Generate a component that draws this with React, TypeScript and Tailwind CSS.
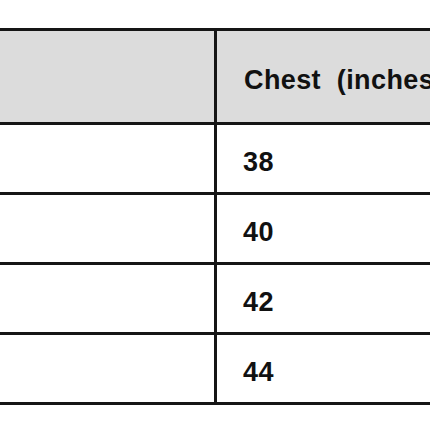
import React from "react";

const rows = ["38", "40", "42", "44"];

export default function App() {
  return (
    <div
      className="w-[430px] h-[430px] overflow-hidden bg-white pt-[28px]"
      style={{ fontFamily: '"Liberation Sans", Arial, sans-serif' }}
    >
      <div className="w-[600px] border-t-[3px] border-[#151515]">
        <div className="grid grid-cols-[217px_1fr] h-[94px] bg-[#dcdcdc] border-b-[3px] border-[#151515]">
          <div className="border-r-[3px] border-[#151515]" />
          <div className="flex items-center pl-[27px] pt-[8px] text-[27px] font-bold tracking-[0.4px] text-[#111] whitespace-pre">
            Chest  (inches)
          </div>
        </div>
        {rows.map((r) => (
          <div
            key={r}
            className="grid grid-cols-[217px_1fr] h-[70px] border-b-[3px] border-[#151515]"
          >
            <div className="border-r-[3px] border-[#151515]" />
            <div className="flex items-center pl-[26px] pt-[8px] text-[27px] font-bold tracking-[0.4px] text-[#111]">
              {r}
            </div>
          </div>
        ))}
      </div>
    </div>
  );
}
